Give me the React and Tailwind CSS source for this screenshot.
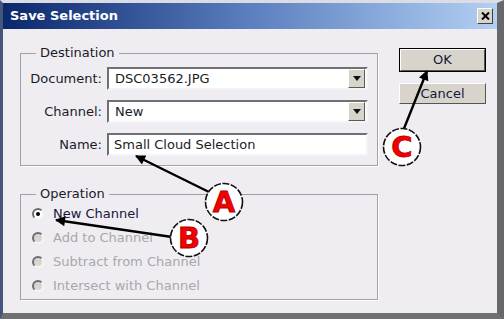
import React from 'react';

const font = { fontFamily: '"DejaVu Sans", Verdana, sans-serif' };

const Combo = ({ value }) => (
  <div className="flex h-[23px] w-[261px] items-center border-2 border-t-[#6f6f74] border-l-[#6f6f74] border-r-[#f4f4f6] border-b-[#f4f4f6] bg-white">
    <span className="flex-1 pl-[6px] text-[13px] text-[#1b1b28]">{value}</span>
    <div className="mr-[1px] flex h-[19px] w-[17px] items-center justify-center border border-t-white border-l-white border-r-[#5a5a5a] border-b-[#5a5a5a] bg-[#d8d4cc]">
      <svg width="8" height="5" viewBox="0 0 8 5"><path d="M0 0h8L4 5z" fill="#111" /></svg>
    </div>
  </div>
);

const Radio = ({ label, checked, disabled }) => (
  <div className="flex h-6 items-center">
    <div
      className={`flex h-[12px] w-[12px] items-center justify-center rounded-full border-2 border-t-[#6d6d70] border-l-[#6d6d70] border-r-[#f4f4f4] border-b-[#f4f4f4] ${
        disabled ? 'bg-[#d9d6d0]' : 'bg-white'
      }`}
    >
      {checked && <div className="h-[4px] w-[4px] rounded-full bg-black" />}
    </div>
    <span className={`ml-[9px] text-[13px] ${disabled ? 'text-[#a9a7ad]' : 'text-[#16163a]'}`}>{label}</span>
  </div>
);

const Callout = ({ cx, cy, letter }) => (
  <g>
    <circle cx={cx} cy={cy} r="18.5" fill="#fff" stroke="#111" strokeWidth="1.6" strokeDasharray="7 1.5" />
    <text
      x={cx}
      y={cy + 10}
      textAnchor="middle"
      fontSize="29"
      fontWeight="bold"
      fill="#f40000"
      stroke="#b00000"
      strokeWidth="0.8"
      style={{ fontFamily: '"DejaVu Sans", sans-serif' }}
    >
      {letter}
    </text>
  </g>
);

export default function App() {
  return (
    <div className="relative h-[319px] w-[504px] overflow-hidden" style={font}>
      <div className="flex h-full w-full flex-col border-t-[3px] border-l-[3px] border-r-[7px] border-b-[6px] border-t-[#dcdce4] border-l-[#44567c] border-r-[#68686c] border-b-[#707074] bg-[#efedf1]">
        {/* title bar */}
        <div className="flex h-[26px] items-center justify-between bg-gradient-to-r from-[#0c276c] via-[#5b7fbf] to-[#b3d0f2] pl-[7px] pr-[4px]">
          <span className="text-[13px] font-bold text-white">Save Selection</span>
          <div className="flex h-[16px] w-[16px] items-center justify-center border border-t-white border-l-white border-r-[#404040] border-b-[#404040] bg-[#d8d4cc]">
            <svg width="9" height="8" viewBox="0 0 9 8">
              <path d="M1 0.5l7 7M8 0.5l-7 7" stroke="#000" strokeWidth="2" />
            </svg>
          </div>
        </div>

        {/* body */}
        <div className="flex flex-1 pl-[17px] pt-[16px]">
          <div className="flex w-[358px] flex-col">
            <fieldset className="border border-[#a3a1a8] pb-[9px] pl-[0px] pr-[8px] shadow-[1px_1px_0_#ffffff]">
              <legend className="ml-[15px] px-[4px] text-[13px] leading-[16px] text-[#1b1b28]">Destination</legend>
              <div className="mt-[6px] grid grid-cols-[81px_1fr] items-center gap-x-[5px] gap-y-[10px]">
                <span className="text-right text-[13px] text-[#1b1b28]">Document:</span>
                <Combo value="DSC03562.JPG" />
                <span className="text-right text-[13px] text-[#1b1b28]">Channel:</span>
                <Combo value="New" />
                <span className="text-right text-[13px] text-[#1b1b28]">Name:</span>
                <div className="flex h-[23px] w-[261px] items-center border-2 border-t-[#6f6f74] border-l-[#6f6f74] border-r-[#f4f4f6] border-b-[#f4f4f6] bg-white pl-[5px] text-[13px] text-[#1b1b28]">
                  Small Cloud Selection
                </div>
              </div>
            </fieldset>

            <fieldset className="mt-[20px] border border-[#a3a1a8] pb-[1px] pl-[11px] shadow-[1px_1px_0_#ffffff]">
              <legend className="ml-[4px] px-[4px] text-[13px] leading-[16px] text-[#1b1b28]">Operation</legend>
              <Radio label="New Channel" checked />
              <Radio label="Add to Channel" disabled />
              <Radio label="Subtract from Channel" disabled />
              <Radio label="Intersect with Channel" disabled />
            </fieldset>
          </div>

          <div className="ml-[21px] flex w-[87px] flex-col pt-[3px]">
            <div className="border border-black">
              <div className="flex h-[22px] items-center justify-center border border-t-white border-l-white border-r-[#555] border-b-[#555] bg-[#d8d4cc] text-[13px] text-[#16163a]">
                OK
              </div>
            </div>
            <div className="mt-[11px] flex h-[21px] items-center justify-center border border-t-white border-l-white border-r-[#555] border-b-[#555] bg-[#d8d4cc] text-[13px] text-[#16163a]">
              Cancel
            </div>
          </div>
        </div>
      </div>

      {/* annotation overlay */}
      <svg className="pointer-events-none absolute left-0 top-0" width="504" height="319" viewBox="0 0 504 319">
        <defs>
          <marker id="ah" viewBox="0 0 10 10" refX="9" refY="5" markerUnits="userSpaceOnUse" markerWidth="15" markerHeight="10" orient="auto">
            <path d="M0 0L10 5L0 10z" fill="#000" />
          </marker>
        </defs>
        <line x1="209" y1="192" x2="136" y2="156" stroke="#000" strokeWidth="2.4" markerEnd="url(#ah)" />
        <line x1="172" y1="237" x2="56" y2="220" stroke="#000" strokeWidth="2.4" markerEnd="url(#ah)" />
        <line x1="403" y1="131" x2="427" y2="71" stroke="#000" strokeWidth="2.4" markerEnd="url(#ah)" />
        <Callout cx={224} cy={202} letter="A" />
        <Callout cx={189} cy={238} letter="B" />
        <Callout cx={402} cy={147} letter="C" />
      </svg>
    </div>
  );
}
